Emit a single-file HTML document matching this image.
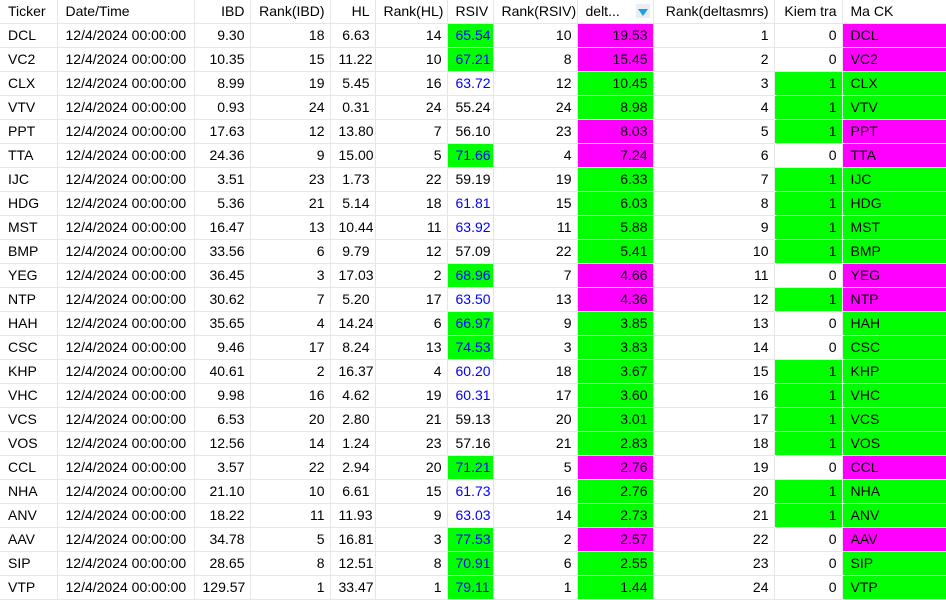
<!DOCTYPE html>
<html><head><meta charset="utf-8"><style>
*{margin:0;padding:0;box-sizing:border-box}
body{width:946px;height:598px;overflow:hidden;background:#fff;font-family:"Liberation Sans",sans-serif;font-size:14px;color:#000}
table{border-collapse:collapse;table-layout:fixed;width:946px}
td,th{height:24px;border-right:1px solid #e6e6e6;border-bottom:1px solid #e6e6e6;padding:0 5px 0 8px;white-space:nowrap;overflow:hidden;font-weight:normal;text-align:right}
th{height:23px;border-bottom:1px solid #e6e6e6}
th.l,td.l{text-align:left}
.g{background:#00ff00}
.m{background:#ff00ff}
.b{color:#0000ff}
.ic{display:inline-block;width:14px;height:14px;background:#e8eef4;vertical-align:-2px;margin-left:12px;position:relative}
.ic:after{content:"";position:absolute;left:2px;top:5px;border:5px solid transparent;border-top:7px solid #1aa0e8}
</style></head><body>
<table>
<colgroup><col style="width:57px"><col style="width:137px"><col style="width:56px"><col style="width:80px"><col style="width:45px"><col style="width:72px"><col style="width:46px"><col style="width:84px"><col style="width:76px"><col style="width:121px"><col style="width:68px"><col style="width:104px"></colgroup>
<tr><th class="l">Ticker</th><th class="l">Date/Time</th><th>IBD</th><th>Rank(IBD)</th><th>HL</th><th>Rank(HL)</th><th>RSIV</th><th>Rank(RSIV)</th><th class="l">delt... <span class="ic"></span></th><th>Rank(deltasmrs)</th><th>Kiem tra</th><th class="l">Ma CK</th></tr>
<tr><td class="l">DCL</td><td class="l">12/4/2024 00:00:00</td><td>9.30</td><td>18</td><td>6.63</td><td>14</td><td class="g b">65.54</td><td>10</td><td class="m">19.53</td><td>1</td><td>0</td><td class="l m">DCL</td></tr>
<tr><td class="l">VC2</td><td class="l">12/4/2024 00:00:00</td><td>10.35</td><td>15</td><td>11.22</td><td>10</td><td class="g b">67.21</td><td>8</td><td class="m">15.45</td><td>2</td><td>0</td><td class="l m">VC2</td></tr>
<tr><td class="l">CLX</td><td class="l">12/4/2024 00:00:00</td><td>8.99</td><td>19</td><td>5.45</td><td>16</td><td class="b">63.72</td><td>12</td><td class="g">10.45</td><td>3</td><td class="g">1</td><td class="l g">CLX</td></tr>
<tr><td class="l">VTV</td><td class="l">12/4/2024 00:00:00</td><td>0.93</td><td>24</td><td>0.31</td><td>24</td><td>55.24</td><td>24</td><td class="g">8.98</td><td>4</td><td class="g">1</td><td class="l g">VTV</td></tr>
<tr><td class="l">PPT</td><td class="l">12/4/2024 00:00:00</td><td>17.63</td><td>12</td><td>13.80</td><td>7</td><td>56.10</td><td>23</td><td class="m">8.03</td><td>5</td><td class="g">1</td><td class="l m">PPT</td></tr>
<tr><td class="l">TTA</td><td class="l">12/4/2024 00:00:00</td><td>24.36</td><td>9</td><td>15.00</td><td>5</td><td class="g b">71.66</td><td>4</td><td class="m">7.24</td><td>6</td><td>0</td><td class="l m">TTA</td></tr>
<tr><td class="l">IJC</td><td class="l">12/4/2024 00:00:00</td><td>3.51</td><td>23</td><td>1.73</td><td>22</td><td>59.19</td><td>19</td><td class="g">6.33</td><td>7</td><td class="g">1</td><td class="l g">IJC</td></tr>
<tr><td class="l">HDG</td><td class="l">12/4/2024 00:00:00</td><td>5.36</td><td>21</td><td>5.14</td><td>18</td><td class="b">61.81</td><td>15</td><td class="g">6.03</td><td>8</td><td class="g">1</td><td class="l g">HDG</td></tr>
<tr><td class="l">MST</td><td class="l">12/4/2024 00:00:00</td><td>16.47</td><td>13</td><td>10.44</td><td>11</td><td class="b">63.92</td><td>11</td><td class="g">5.88</td><td>9</td><td class="g">1</td><td class="l g">MST</td></tr>
<tr><td class="l">BMP</td><td class="l">12/4/2024 00:00:00</td><td>33.56</td><td>6</td><td>9.79</td><td>12</td><td>57.09</td><td>22</td><td class="g">5.41</td><td>10</td><td class="g">1</td><td class="l g">BMP</td></tr>
<tr><td class="l">YEG</td><td class="l">12/4/2024 00:00:00</td><td>36.45</td><td>3</td><td>17.03</td><td>2</td><td class="g b">68.96</td><td>7</td><td class="m">4.66</td><td>11</td><td>0</td><td class="l m">YEG</td></tr>
<tr><td class="l">NTP</td><td class="l">12/4/2024 00:00:00</td><td>30.62</td><td>7</td><td>5.20</td><td>17</td><td class="b">63.50</td><td>13</td><td class="m">4.36</td><td>12</td><td class="g">1</td><td class="l m">NTP</td></tr>
<tr><td class="l">HAH</td><td class="l">12/4/2024 00:00:00</td><td>35.65</td><td>4</td><td>14.24</td><td>6</td><td class="g b">66.97</td><td>9</td><td class="g">3.85</td><td>13</td><td>0</td><td class="l g">HAH</td></tr>
<tr><td class="l">CSC</td><td class="l">12/4/2024 00:00:00</td><td>9.46</td><td>17</td><td>8.24</td><td>13</td><td class="g b">74.53</td><td>3</td><td class="g">3.83</td><td>14</td><td>0</td><td class="l g">CSC</td></tr>
<tr><td class="l">KHP</td><td class="l">12/4/2024 00:00:00</td><td>40.61</td><td>2</td><td>16.37</td><td>4</td><td class="b">60.20</td><td>18</td><td class="g">3.67</td><td>15</td><td class="g">1</td><td class="l g">KHP</td></tr>
<tr><td class="l">VHC</td><td class="l">12/4/2024 00:00:00</td><td>9.98</td><td>16</td><td>4.62</td><td>19</td><td class="b">60.31</td><td>17</td><td class="g">3.60</td><td>16</td><td class="g">1</td><td class="l g">VHC</td></tr>
<tr><td class="l">VCS</td><td class="l">12/4/2024 00:00:00</td><td>6.53</td><td>20</td><td>2.80</td><td>21</td><td>59.13</td><td>20</td><td class="g">3.01</td><td>17</td><td class="g">1</td><td class="l g">VCS</td></tr>
<tr><td class="l">VOS</td><td class="l">12/4/2024 00:00:00</td><td>12.56</td><td>14</td><td>1.24</td><td>23</td><td>57.16</td><td>21</td><td class="g">2.83</td><td>18</td><td class="g">1</td><td class="l g">VOS</td></tr>
<tr><td class="l">CCL</td><td class="l">12/4/2024 00:00:00</td><td>3.57</td><td>22</td><td>2.94</td><td>20</td><td class="g b">71.21</td><td>5</td><td class="m">2.76</td><td>19</td><td>0</td><td class="l m">CCL</td></tr>
<tr><td class="l">NHA</td><td class="l">12/4/2024 00:00:00</td><td>21.10</td><td>10</td><td>6.61</td><td>15</td><td class="b">61.73</td><td>16</td><td class="g">2.76</td><td>20</td><td class="g">1</td><td class="l g">NHA</td></tr>
<tr><td class="l">ANV</td><td class="l">12/4/2024 00:00:00</td><td>18.22</td><td>11</td><td>11.93</td><td>9</td><td class="b">63.03</td><td>14</td><td class="g">2.73</td><td>21</td><td class="g">1</td><td class="l g">ANV</td></tr>
<tr><td class="l">AAV</td><td class="l">12/4/2024 00:00:00</td><td>34.78</td><td>5</td><td>16.81</td><td>3</td><td class="g b">77.53</td><td>2</td><td class="m">2.57</td><td>22</td><td>0</td><td class="l m">AAV</td></tr>
<tr><td class="l">SIP</td><td class="l">12/4/2024 00:00:00</td><td>28.65</td><td>8</td><td>12.51</td><td>8</td><td class="g b">70.91</td><td>6</td><td class="g">2.55</td><td>23</td><td>0</td><td class="l g">SIP</td></tr>
<tr><td class="l">VTP</td><td class="l">12/4/2024 00:00:00</td><td>129.57</td><td>1</td><td>33.47</td><td>1</td><td class="g b">79.11</td><td>1</td><td class="g">1.44</td><td>24</td><td>0</td><td class="l g">VTP</td></tr>
</table>
</body></html>
